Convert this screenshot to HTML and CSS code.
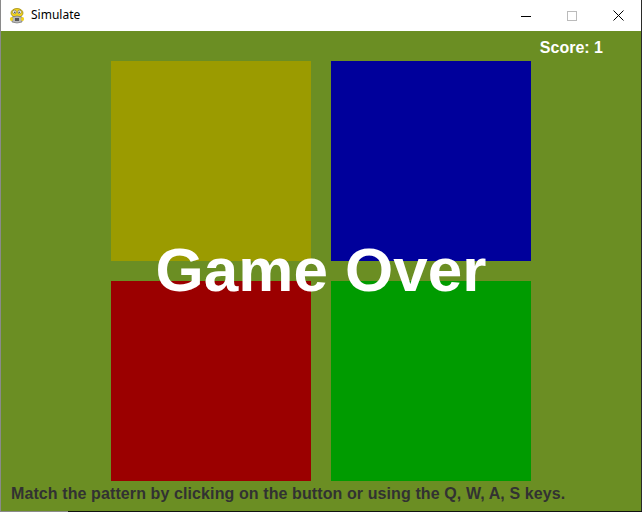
FILE: index.html
```html
<!DOCTYPE html>
<html>
<head>
<meta charset="utf-8">
<title>Simulate</title>
<link rel="stylesheet" href="styles.css">
</head>
<body>
<div class="window">
  <div class="titlebar">
    <div class="title-left">
      <svg class="app-icon" width="18" height="18" viewBox="0 0 18 18">
        <ellipse cx="9" cy="6" rx="6" ry="4.5" fill="#f2d31b" stroke="#a08a10" stroke-width="0.8"/>
        <circle cx="6.5" cy="5" r="1.8" fill="#fff" stroke="#555" stroke-width="0.5"/>
        <circle cx="11.5" cy="5" r="1.8" fill="#fff" stroke="#555" stroke-width="0.5"/>
        <circle cx="6.8" cy="5.2" r="0.7" fill="#222"/>
        <circle cx="11.2" cy="5.2" r="0.7" fill="#222"/>
        <path d="M4 10 Q9 8 14 10 L14 15 Q9 17 4 15 Z" fill="#b8b8b8" stroke="#666" stroke-width="0.6"/>
        <rect x="7" y="11" width="4" height="3" fill="#555"/>
        <ellipse cx="3.5" cy="12" rx="1.6" ry="2" fill="#f2d31b"/>
        <ellipse cx="14.5" cy="12" rx="1.6" ry="2" fill="#f2d31b"/>
      </svg>
      <span class="title-text">Simulate</span>
    </div>
    <div class="controls">
      <span class="ctl"><svg width="10" height="10" viewBox="0 0 10 10"><path d="M0 5.5 H10" stroke="#000" stroke-width="1"/></svg></span>
      <span class="ctl"><svg width="10" height="10" viewBox="0 0 10 10"><rect x="0.5" y="0.5" width="9" height="9" fill="none" stroke="#bbb" stroke-width="1"/></svg></span>
      <span class="ctl"><svg width="11" height="11" viewBox="0 0 11 11"><path d="M0.5 0.5 L10.5 10.5 M10.5 0.5 L0.5 10.5" stroke="#000" stroke-width="1"/></svg></span>
    </div>
  </div>
  <div class="game">
    <div class="score-row"><span class="score">Score: 1</span></div>
    <div class="board">
      <div class="pad yellow"></div>
      <div class="pad blue"></div>
      <div class="pad red"></div>
      <div class="pad green"></div>
    </div>
    <div class="hint">Match the pattern by clicking on the button or using the Q, W, A, S keys.</div>
    <div class="gameover">Game Over</div>
  </div>
  <div class="bottom-edge"><span class="edge-gray"></span></div>
</div>
</body>
</html>
```
FILE: styles.css
```css
html, body {
  margin: 0;
  padding: 0;
  background: #1a1a1a;
}
.window {
  width: 642px;
  height: 512px;
  display: flex;
  flex-direction: column;
  overflow: hidden;
}
.titlebar {
  height: 31px;
  background: #ffffff;
  display: flex;
  justify-content: space-between;
  align-items: center;
  border-left: 1px solid #8a8a8a;
  border-right: 1px solid #2a2a2a;
  box-sizing: border-box;
}
.title-left {
  display: flex;
  align-items: center;
  padding-left: 7px;
  gap: 5px;
}
.app-icon {
  display: block;
}
.title-text {
  font-family: "Noto Sans", "DejaVu Sans", sans-serif;
  font-size: 12px;
  color: #000;
  position: relative;
  top: -1px;
}
.controls {
  display: flex;
  height: 100%;
}
.ctl {
  width: 46px;
  display: flex;
  align-items: center;
  justify-content: center;
}
.game {
  position: relative;
  height: 480px;
  background: #6b8e23;
  border-left: 1px solid #8a8a8a;
  border-right: 1px solid #2a2a2a;
  display: flex;
  flex-direction: column;
  font-family: "Liberation Sans", Arial, sans-serif;
  font-weight: bold;
}
.score-row {
  height: 30px;
  box-sizing: border-box;
  padding-top: 8px;
  padding-right: 38px;
  display: flex;
  justify-content: flex-end;
}
.score {
  color: #ffffff;
  font-size: 16px;
  line-height: 18px;
}
.board {
  margin-left: 110px;
  display: grid;
  grid-template-columns: 200px 200px;
  grid-template-rows: 200px 200px;
  gap: 20px;
}
.pad { width: 200px; height: 200px; }
.yellow { background: #9b9b00; }
.blue { background: #00009b; }
.red { background: #9b0000; }
.green { background: #009b00; }
.hint {
  margin-top: 4px;
  padding-left: 10px;
  color: #323232;
  font-size: 16px;
  line-height: 18px;
  letter-spacing: 0.1px;
  white-space: nowrap;
}
.gameover {
  position: absolute;
  left: 0;
  right: 0;
  top: 204px;
  text-align: center;
  color: #ffffff;
  font-size: 62px;
  line-height: 70px;
  letter-spacing: 0px;
}
.bottom-edge {
  height: 1px;
  background: #111;
  display: flex;
}
.edge-gray {
  width: 68px;
  background: #8a8a8a;
}
```
